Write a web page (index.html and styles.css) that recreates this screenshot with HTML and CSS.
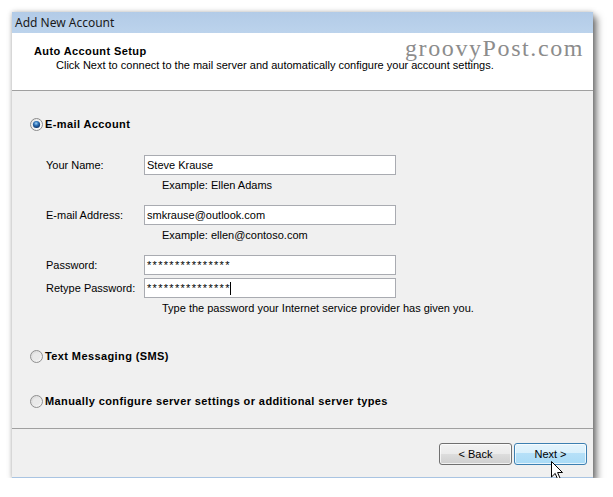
FILE: index.html
```html
<!DOCTYPE html>
<html lang="en">
<head>
    <meta charset="UTF-8">
    <title>Add New Account</title>
    <link rel="stylesheet" href="styles.css">
</head>
<body>
    <div class="window">
        <div class="titlebar">Add New Account</div>

        <div class="header">
            <div class="header-title">Auto Account Setup</div>
            <div class="header-desc">Click Next to connect to the mail server and automatically configure your account settings.</div>
            <div class="watermark">groovyPost.com</div>
        </div>

        <div class="content">
            <div class="option option-email">
                <svg class="radio" width="13" height="13" viewBox="0 0 13 13">
                    <defs>
                        <radialGradient id="dot" cx="45%" cy="35%" r="65%">
                            <stop offset="0" stop-color="#9fd2f6"/>
                            <stop offset="0.45" stop-color="#2f73b8"/>
                            <stop offset="1" stop-color="#0b2f63"/>
                        </radialGradient>
                        <linearGradient id="ring" x1="0" y1="0" x2="1" y2="1">
                            <stop offset="0" stop-color="#e4e4e4"/>
                            <stop offset="1" stop-color="#ffffff"/>
                        </linearGradient>
                    </defs>
                    <circle cx="6.5" cy="6.5" r="6" fill="url(#ring)" stroke="#8b8b8b"/>
                    <circle cx="6.5" cy="6.5" r="3.6" fill="url(#dot)"/>
                </svg>
                <span>E-mail Account</span>
            </div>

            <div class="form">
                <div class="field">
                    <span class="label">Your Name:</span>
                    <div class="textbox">Steve Krause</div>
                </div>
                <div class="example">Example: Ellen Adams</div>

                <div class="field field-gap">
                    <span class="label">E-mail Address:</span>
                    <div class="textbox">smkrause@outlook.com</div>
                </div>
                <div class="example">Example: ellen@contoso.com</div>

                <div class="field field-gap">
                    <span class="label">Password:</span>
                    <div class="textbox textbox-secret">***************</div>
                </div>
                <div class="field field-tight">
                    <span class="label">Retype Password:</span>
                    <div class="textbox textbox-secret">***************<span class="caret"></span></div>
                </div>
                <div class="example">Type the password your Internet service provider has given you.</div>
            </div>

            <div class="option option-sms">
                <svg class="radio" width="13" height="13" viewBox="0 0 13 13">
                    <defs>
                        <linearGradient id="off1" x1="0" y1="0" x2="1" y2="1">
                            <stop offset="0" stop-color="#d6d6d6"/>
                            <stop offset="1" stop-color="#fafafa"/>
                        </linearGradient>
                    </defs>
                    <circle cx="6.5" cy="6.5" r="6" fill="url(#off1)" stroke="#8f8f8f"/>
                    <circle cx="6.5" cy="6.5" r="3.6" fill="#e9e9e9"/>
                </svg>
                <span>Text Messaging (SMS)</span>
            </div>

            <div class="option option-manual">
                <svg class="radio" width="13" height="13" viewBox="0 0 13 13">
                    <circle cx="6.5" cy="6.5" r="6" fill="url(#off1)" stroke="#8f8f8f"/>
                    <circle cx="6.5" cy="6.5" r="3.6" fill="#e9e9e9"/>
                </svg>
                <span>Manually configure server settings or additional server types</span>
            </div>
        </div>

        <div class="footer">
            <button class="btn">&lt; Back</button>
            <button class="btn btn-default">Next &gt;</button>
        </div>

        <!-- mouse pointer resting over the Next button -->
        <svg class="cursor" width="13" height="20" viewBox="0 0 13 20">
            <path d="M0.5 0.5 L0.5 16 L4.2 12.4 L6.8 18.6 L9.2 17.6 L6.6 11.5 L11.5 11.5 Z" fill="#fff" stroke="#000" stroke-width="1" stroke-linejoin="miter"/>
        </svg>
    </div>
</body>
</html>
```

FILE: styles.css
```css
body {
    margin: 0;
    background-color: #ffffff;
    font-family: 'Liberation Sans', Arial, sans-serif;
    font-size: 11px;
    color: #000;
}

.window {
    position: relative;
    width: 581px;
    height: 466px;
    margin: 12px 0 0 12px;
    box-sizing: border-box;
    background-color: #f0f0f0;
    border-bottom: 1px solid #a9c4e2;
    box-shadow: 0 0 5px rgba(0, 0, 0, 0.25), 4px 5px 7px rgba(0, 0, 0, 0.5);
}

.titlebar {
    height: 21px;
    line-height: 21px;
    padding-left: 3px;
    background: linear-gradient(#b2cbe7, #bcd3ec);
    font-family: 'Noto Sans', 'Open Sans', sans-serif;
    font-size: 12px;
    color: #1a1a1a;
}

.header {
    position: relative;
    height: 58px;
    box-sizing: border-box;
    padding: 11px 0 0 22px;
    background-color: #ffffff;
    border-bottom: 1px solid #a0a0a0;
}

.header-title {
    font-weight: bold;
    letter-spacing: 0.4px;
    line-height: 14px;
}

.header-desc {
    line-height: 14px;
    margin-left: 22px;
}

.watermark {
    position: absolute;
    left: 393px;
    top: 0;
    font-family: 'Liberation Serif', 'Times New Roman', serif;
    font-size: 24px;
    letter-spacing: 1.6px;
    color: #8c8c8c;
    line-height: 30px;
}

.content {
    height: 337px;
    box-sizing: border-box;
    padding-left: 18px;
    overflow: hidden;
}

.option {
    display: flex;
    align-items: center;
    gap: 2px;
    height: 14px;
    font-weight: bold;
    letter-spacing: 0.4px;
}

.radio {
    flex: none;
}

.option-email {
    margin-top: 26px;
}

.option-sms {
    margin-top: 34px;
}

.option-manual {
    margin-top: 31px;
}

.form {
    margin-top: 24px;
    padding-left: 16px;
}

.field {
    display: flex;
    align-items: center;
    height: 20px;
}

.field-gap {
    margin-top: 13px;
}

.field-tight {
    margin-top: 3px;
}

.label {
    width: 98px;
    flex: none;
}

.textbox {
    width: 252px;
    height: 20px;
    box-sizing: border-box;
    padding: 0 2px;
    line-height: 18px;
    background-color: #ffffff;
    border: 1px solid #a9abb1;
    white-space: nowrap;
}

.textbox-secret {
    letter-spacing: 1.3px;
}

.caret {
    display: inline-block;
    width: 1px;
    height: 13px;
    margin-left: -1px;
    vertical-align: -3px;
    background-color: #000;
}

.example {
    margin: 3px 0 0 116px;
    line-height: 14px;
}

.footer {
    display: flex;
    justify-content: flex-end;
    gap: 2px;
    height: 48px;
    box-sizing: border-box;
    padding: 14px 6px 0 0;
    border-top: 1px solid #a0a0a0;
}

.btn {
    width: 73px;
    height: 22px;
    padding: 0;
    font-family: 'Liberation Sans', Arial, sans-serif;
    font-size: 11px;
    color: #000;
    border: 1px solid #707070;
    border-radius: 3px;
    background: linear-gradient(#f2f2f2 0%, #ebebeb 50%, #dddddd 50%, #cfcfcf 100%);
    box-shadow: inset 0 0 0 1px rgba(255, 255, 255, 0.7);
}

.btn-default {
    border-color: #3c7fb1;
    background: linear-gradient(#e5f4fc 0%, #d9f0fc 45%, #b6e0f8 45%, #a9dbf6 100%);
}

.cursor {
    position: absolute;
    left: 539px;
    top: 449px;
}
```
